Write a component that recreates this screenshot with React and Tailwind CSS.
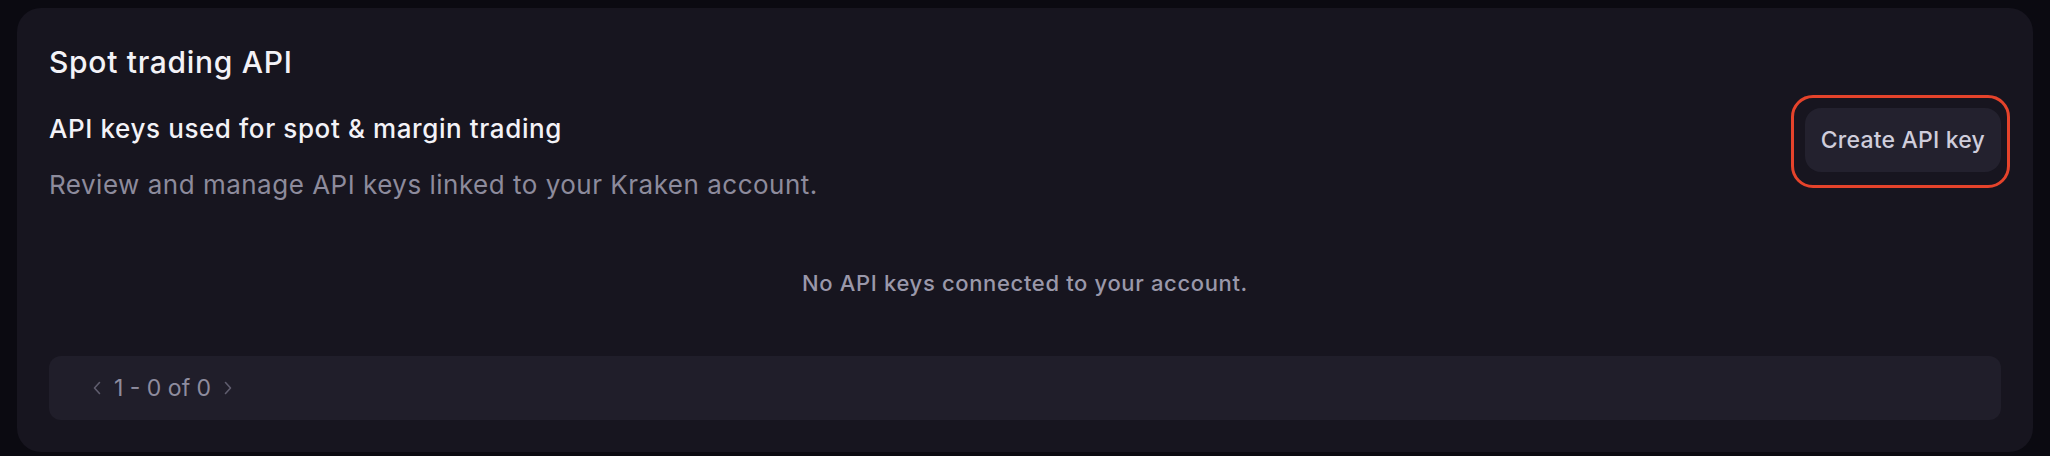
import React from 'react'

const font = { fontFamily: 'Inter, "Noto Sans", sans-serif' }

function Chevron({ dir }) {
    // small thin chevron used by the pager
    return (
        <svg width="10" height="14" viewBox="0 0 10 14" fill="none" className="shrink-0">
            {dir === 'left'
                ? <path d="M7.5 1.5L2.5 7l5 5.5" stroke="#5f5d6e" strokeWidth="1.6" strokeLinecap="round" strokeLinejoin="round" />
                : <path d="M2.5 1.5L7.5 7l-5 5.5" stroke="#5f5d6e" strokeWidth="1.6" strokeLinecap="round" strokeLinejoin="round" />}
        </svg>
    )
}

export default function App() {
    return (
        <div className="h-[456px] w-full bg-[#0b0a11] pt-[8px] px-[17px]" style={font}>
            <div className="h-[444px] rounded-[24px] bg-[#17151f] px-8 pt-[36px] pb-8 flex flex-col">
                <h2 className="text-[30px] leading-[36px] font-medium text-[#f3f2f7] tracking-[0.7px]">Spot trading API</h2>

                <div className="mt-[28px] flex items-start justify-between">
                    <div className="pt-[5px]">
                        <p className="text-[26px] leading-[32px] font-medium text-[#f3f2f7] tracking-[0.6px]">API keys used for spot &amp; margin trading</p>
                        <p className="mt-[24px] text-[26px] leading-[32px] text-[#8d8b9c] tracking-[0.5px]">Review and manage API keys linked to your Kraken account.</p>
                    </div>
                    <div className="relative">
                        <button className="h-[64px] px-4 rounded-[16px] bg-[#23212e] text-[23px] font-medium text-[#cfcddb] tracking-[0.2px]">
                            Create API key
                        </button>
                        <span className="pointer-events-none absolute -left-[14px] -right-[9px] -top-[13px] -bottom-[16px] rounded-[22px] border-[3px] border-[#e5432b]"></span>
                    </div>
                </div>

                <p className="mt-[66px] text-center text-[22px] leading-[32px] font-medium text-[#9a98aa] tracking-[0.65px]">No API keys connected to your account.</p>

                <div className="mt-auto h-[64px] rounded-[12px] bg-[#201e2a] flex items-center gap-[12px] pl-[43px]">
                    <Chevron dir="left" />
                    <span className="text-[23px] text-[#8e8c9e]">1 - 0 of 0</span>
                    <Chevron dir="right" />
                </div>
            </div>
        </div>
    )
}
